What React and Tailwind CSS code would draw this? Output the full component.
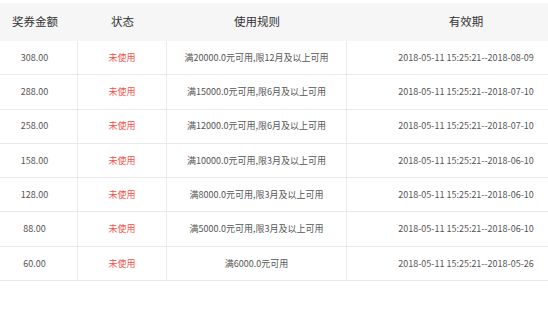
const rows = [
  { amount: "308.00", rule: "满20000.0元可用,限12月及以上可用", date: "2018-05-11 15:25:21--2018-08-09" },
  { amount: "288.00", rule: "满15000.0元可用,限6月及以上可用", date: "2018-05-11 15:25:21--2018-07-10" },
  { amount: "258.00", rule: "满12000.0元可用,限6月及以上可用", date: "2018-05-11 15:25:21--2018-07-10" },
  { amount: "158.00", rule: "满10000.0元可用,限3月及以上可用", date: "2018-05-11 15:25:21--2018-06-10" },
  { amount: "128.00", rule: "满8000.0元可用,限3月及以上可用", date: "2018-05-11 15:25:21--2018-06-10" },
  { amount: "88.00", rule: "满5000.0元可用,限3月及以上可用", date: "2018-05-11 15:25:21--2018-06-10" },
  { amount: "60.00", rule: "满6000.0元可用", date: "2018-05-11 15:25:21--2018-05-26" },
];

const font = { fontFamily: '"Noto Sans CJK SC", "Noto Sans", sans-serif' };

export default function App() {
  return (
    <div className="w-[548px] h-[309px] bg-white overflow-hidden pt-[3px]" style={font}>
      <div className="w-[585px]">
        {/* 표 머리 */}
        <div className="grid grid-cols-[78px_89px_180px_238px] h-[38px] bg-[#f6f6f6] text-[11.5px] text-[#333]">
          <div className="flex items-center justify-center pr-2">奖券金额</div>
          <div className="flex items-center justify-center">状态</div>
          <div className="flex items-center justify-center">使用规则</div>
          <div className="flex items-center justify-center">有效期</div>
        </div>

        {/* 행 */}
        {rows.map((r) => (
          <div
            key={r.rule + r.amount}
            className="grid grid-cols-[78px_89px_180px_238px] h-[34.3px] border-b border-[#e9e9e9] text-[9px] text-[#555]"
          >
            <div className="flex items-center justify-center pr-2 border-r border-[#ececec]">{r.amount}</div>
            <div className="flex items-center justify-center border-r border-[#ececec] text-[#f2504b]">未使用</div>
            <div className="flex items-center justify-center border-r border-[#ececec]">{r.rule}</div>
            <div className="flex items-center justify-center">{r.date}</div>
          </div>
        ))}
      </div>
    </div>
  );
}
